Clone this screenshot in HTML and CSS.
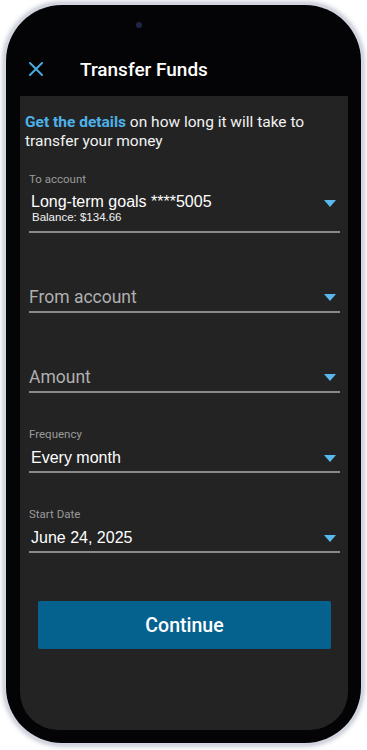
FILE: index.html
```html
<!DOCTYPE html>
<html>
<head>
<meta charset="utf-8">
<link rel="stylesheet" href="styles.css">
</head>
<body>
<div class="device">
  <div class="camera"></div>
  <header class="header">
    <svg class="close" width="14" height="14" viewBox="0 0 14 14"><path d="M1 1L13 13M13 1L1 13" stroke="#4aa9dc" stroke-width="2" stroke-linecap="round"/></svg>
    <h1 class="title">Transfer Funds</h1>
  </header>
  <main class="screen">
    <p class="intro"><span class="link">Get the details</span> on how long it will take to transfer your money</p>
    <div class="field field-first">
      <div class="label">To account</div>
      <div class="row">
        <div class="value-wrap">
          <div class="value">Long-term goals ****5005</div>
          <div class="balance">Balance: $134.66</div>
        </div>
        <span class="caret"></span>
      </div>
    </div>
    <div class="field">
      <div class="row">
        <div class="placeholder">From account</div>
        <span class="caret"></span>
      </div>
    </div>
    <div class="field">
      <div class="row">
        <div class="placeholder">Amount</div>
        <span class="caret"></span>
      </div>
    </div>
    <div class="field">
      <div class="label">Frequency</div>
      <div class="row">
        <div class="value">Every month</div>
        <span class="caret"></span>
      </div>
    </div>
    <div class="field">
      <div class="label">Start Date</div>
      <div class="row">
        <div class="value">June 24, 2025</div>
        <span class="caret"></span>
      </div>
    </div>
    <button class="continue">Continue</button>
  </main>
</div>
</body>
</html>
```
FILE: styles.css
```css
html, body {
  margin: 0;
  padding: 0;
  background: #ffffff;
  width: 367px;
  height: 750px;
  overflow: hidden;
}
.device {
  position: relative;
  box-sizing: border-box;
  margin: 5px 6px 0 6px;
  height: 738px;
  border-radius: 56px;
  background: #040406;
  box-shadow: 0 0 0 2px #d3d6e0, 0 0 5px 3px #b8bccb;
  display: flex;
  flex-direction: column;
}
.camera {
  position: absolute;
  left: 130px;
  top: 17px;
  width: 6px;
  height: 6px;
  border-radius: 50%;
  background: #1e2545;
}
.header {
  box-sizing: border-box;
  height: 91px;
  padding: 51px 0 0 23px;
  display: flex;
  align-items: flex-start;
  flex: none;
}
.header .close {
  flex: none;
  margin-top: 6px;
}
.title {
  margin: 0 0 0 37px;
  height: 28px;
  line-height: 28px;
  font-family: Roboto, "Liberation Sans", sans-serif;
  font-weight: 500;
  font-size: 19px;
  color: #ffffff;
}
.screen {
  flex: 1;
  margin: 0 13px 13px 14px;
  background: #232323;
  border-radius: 0 0 38px 38px;
  padding: 17px 8px 0 5px;
  display: flex;
  flex-direction: column;
}
.intro {
  margin: 0;
  font-family: Roboto, "Liberation Sans", sans-serif;
  font-size: 15.5px;
  line-height: 19px;
  color: #f2f2f2;
}
.link {
  color: #4db2ea;
  font-weight: 700;
}
.field {
  box-sizing: border-box;
  height: 80px;
  margin-left: 4px;
  border-bottom: 2px solid #8a8a8a;
  display: flex;
  flex-direction: column;
  justify-content: flex-end;
  padding-bottom: 3px;
}
.field-first {
  height: 82px;
  padding-bottom: 7px;
}
.label {
  font-family: Roboto, "Liberation Sans", sans-serif;
  font-size: 11.5px;
  line-height: 14px;
  color: #9a9a9a;
  margin-bottom: 7px;
}
.row {
  display: flex;
  justify-content: space-between;
  align-items: center;
}
.field-first .row {
  align-items: flex-start;
}
.field-first .caret {
  margin-top: 7px;
}
.value {
  font-family: "Liberation Sans", Arial, sans-serif;
  font-size: 16px;
  line-height: 20px;
  color: #ffffff;
  padding-left: 2px;
}
.field-first .value {
  line-height: 18px;
}
.balance {
  font-family: "Liberation Sans", Arial, sans-serif;
  font-size: 11.5px;
  line-height: 13px;
  color: #f2f2f2;
  padding-left: 3px;
}
.placeholder {
  font-family: Roboto, "Liberation Sans", sans-serif;
  font-size: 17.5px;
  line-height: 22px;
  color: #b0b0b0;
}
.caret {
  width: 0;
  height: 0;
  border-left: 6px solid transparent;
  border-right: 6px solid transparent;
  border-top: 7px solid #5ab9ec;
  margin-right: 4px;
}
.continue {
  margin: 48px 9px 0 13px;
  height: 48px;
  border: none;
  border-radius: 2px;
  background: #05628f;
  color: #ffffff;
  font-family: Roboto, "Liberation Sans", sans-serif;
  font-weight: 500;
  font-size: 19.5px;
  padding: 0;
}
```
